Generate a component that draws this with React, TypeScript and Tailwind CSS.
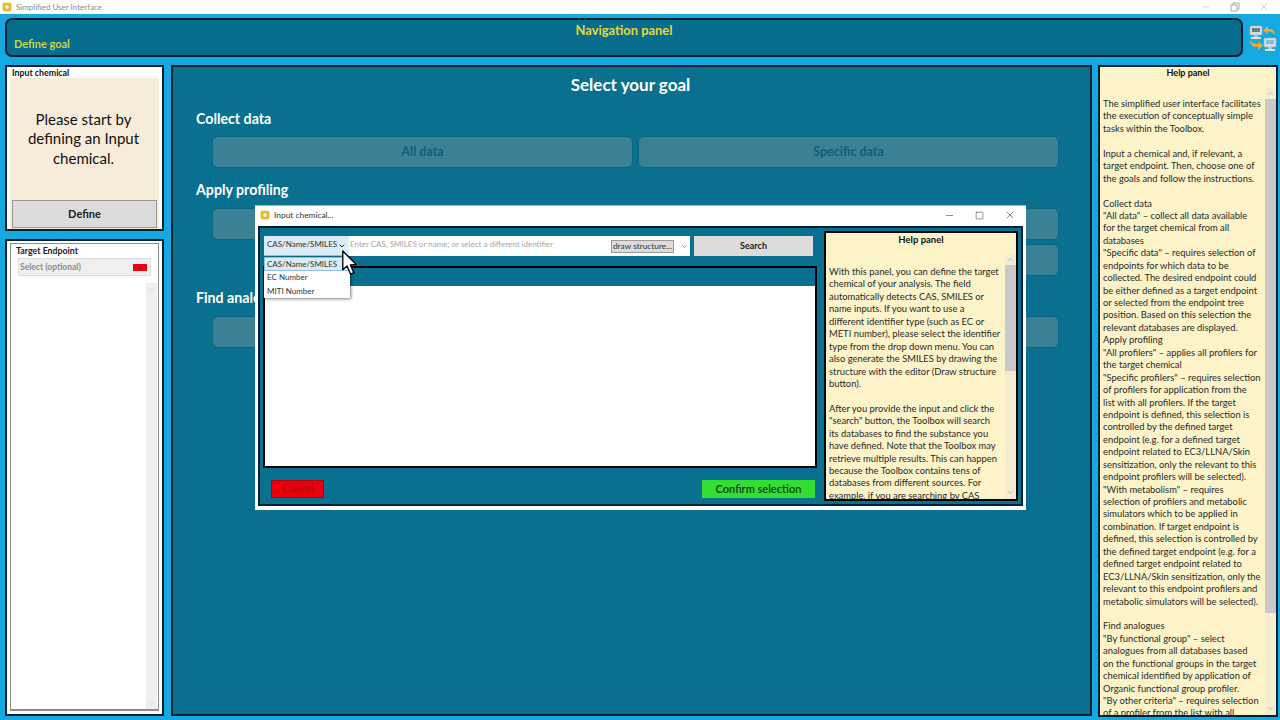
import React from "react";
import { ChevronDown, ChevronUp, Minus, Square, X } from "lucide-react";

const mainHelp = [
  "The simplified user interface facilitates",
  "the execution of conceptually simple",
  "tasks within the Toolbox.",
  "",
  "Input a chemical and, if relevant, a",
  "target endpoint. Then, choose one of",
  "the goals and follow the instructions.",
  "",
  "Collect data",
  "\"All data\" – collect all data available",
  "for the target chemical from all",
  "databases",
  "\"Specific data\" – requires selection of",
  "endpoints for which data to be",
  "collected. The desired endpoint could",
  "be either defined as a target endpoint",
  "or selected from the endpoint tree",
  "position. Based on this selection the",
  "relevant databases are displayed.",
  "Apply profiling",
  "\"All profilers\" – applies all profilers for",
  "the target chemical",
  "\"Specific profilers\" – requires selection",
  "of profilers for application from the",
  "list with all profilers. If the target",
  "endpoint is defined, this selection is",
  "controlled by the defined target",
  "endpoint (e.g. for a defined target",
  "endpoint related to EC3/LLNA/Skin",
  "sensitization, only the relevant to this",
  "endpoint profilers will be selected).",
  "\"With metabolism\" – requires",
  "selection of profilers and metabolic",
  "simulators which to be applied in",
  "combination. If target endpoint is",
  "defined, this selection is controlled by",
  "the defined target endpoint (e.g. for a",
  "defined target endpoint related to",
  "EC3/LLNA/Skin sensitization, only the",
  "relevant to this endpoint profilers and",
  "metabolic simulators will be selected).",
  "",
  "Find analogues",
  "\"By functional group\" – select",
  "analogues from all databases based",
  "on the functional groups in the target",
  "chemical identified by application of",
  "Organic functional group profiler.",
  "\"By other criteria\" – requires selection",
  "of a profiler from the list with all",
];

const modalHelp = [
  "With this panel, you can define the target",
  "chemical of your analysis. The field",
  "automatically detects CAS, SMILES or",
  "name inputs. If you want to use a",
  "different identifier type (such as EC or",
  "METI number), please select the identifier",
  "type from the drop down menu. You can",
  "also generate the SMILES by drawing the",
  "structure with the editor (Draw structure",
  "button).",
  "",
  "After you provide the input and click the",
  "\"search\" button, the Toolbox will search",
  "its databases to find the substance you",
  "have defined. Note that the Toolbox may",
  "retrieve multiple results. This can happen",
  "because the Toolbox contains tens of",
  "databases from different sources. For",
  "example, if you are searching by CAS",
];

const AppIcon = () => (
  <svg width="10" height="10" viewBox="0 0 10 10" className="shrink-0">
    <rect x="0.5" y="0.5" width="9" height="9" rx="2" fill="#f2c230" />
    <rect x="2.6" y="2.6" width="4.8" height="4.8" rx="1.6" fill="#fdf3d0" stroke="#c08a20" strokeWidth="0.8" />
  </svg>
);

const RestoreIcon = () => (
  <svg width="10" height="10" viewBox="0 0 10 10" fill="none" stroke="currentColor" strokeWidth="0.9">
    <rect x="1" y="3" width="6" height="6" />
    <path d="M3 3 V1 H9 V7 H7" />
  </svg>
);

const SwapIcon = () => (
  <svg width="28" height="28" viewBox="0 0 28 28" className="shrink-0">
    <rect x="1" y="2" width="12" height="9" rx="1" fill="#d5dfe4" stroke="#a7b5bc" strokeWidth="0.7" />
    <rect x="3" y="4" width="8" height="4" fill="#6f7d88" />
    <rect x="5" y="11" width="4" height="2" fill="#b9c4ca" />
    <rect x="2" y="13" width="10" height="2" rx="0.5" fill="#dfe6ea" />
    <rect x="15" y="14" width="12" height="9" rx="1" fill="#d5dfe4" stroke="#a7b5bc" strokeWidth="0.7" />
    <rect x="17" y="16" width="8" height="4" fill="#7cc0e4" />
    <rect x="19" y="23" width="4" height="2" fill="#b9c4ca" />
    <rect x="16" y="25" width="10" height="2" rx="0.5" fill="#dfe6ea" />
    <path d="M26 11 C26 6 22 4.5 19 5 L19 2 L14 6.5 L19 10 L19 7.5 C22 7 24 8.5 26 11 Z" fill="#f0a92c" />
    <path d="M1 16 C1 22 5 23.5 9 23 L9 26 L14 21.5 L9 17.5 L9 20 C6 20.5 3 19 1 16 Z" fill="#f0a92c" />
  </svg>
);

const Cursor = () => (
  <svg width="17" height="26" viewBox="0 0 17 27" className="absolute left-[341px] top-[250px]">
    <path d="M1.5 1 L1.5 20.5 L6 16.5 L9.5 25 L13 23.5 L9.5 15.5 L15.5 15 Z" fill="#fff" stroke="#000" strokeWidth="1.4" strokeLinejoin="round" />
  </svg>
);

const GoalButton = ({ label = "" }: { label?: string }) => (
  <div className="h-[32px] rounded-[6px] border border-[#0b6580] bg-[#3a8195] flex items-center justify-center text-[12.5px] font-bold text-[#0f5f78]">
    {label}
  </div>
);

const Lines = ({ lines }: { lines: string[] }) => (
  <div className="text-[9.4px] leading-[12.45px] text-[#2a2a2a] whitespace-nowrap">
    {lines.map((line, i) => (
      <div key={i} className="h-[12.45px]">
        {line}
      </div>
    ))}
  </div>
);

const Scrollbar = ({ thumb }: { thumb: string }) => (
  <div className="w-[11px] shrink-0 flex flex-col items-center bg-[#f3edd2]">
    <ChevronUp size={9} className="text-[#aaa] mt-[1px]" />
    <div className={`w-full bg-[#c9c9c9] mt-[1px] ${thumb}`} />
    <div className="flex-1" />
    <ChevronDown size={9} className="text-[#aaa] my-[2px]" />
  </div>
);

const InputChemicalWindow = () => (
  <div className="absolute left-[255px] top-[205px] w-[771px] h-[305px] bg-white border-t border-[#7fc4dc] flex flex-col px-[3px] pb-[4px]">
    <div className="h-[20px] flex items-center gap-[3px] pl-[2px] pb-[2px] text-[8.4px] text-[#333] shrink-0">
      <AppIcon />
      <span className="ml-[1px]">Input chemical...</span>
      <div className="ml-auto flex items-center gap-[20px] pr-[7px] text-[#333]">
        <Minus size={11} strokeWidth={1.2} />
        <Square size={9} strokeWidth={1.4} />
        <X size={12} strokeWidth={1.2} />
      </div>
    </div>
    <div className="flex-1 bg-[#0a7090] border-2 border-[#03202e] flex min-h-0">
      <div className="w-[563px] shrink-0 flex flex-col pl-[3px] pt-[8px]">
        <div className="flex h-[20px] pl-[1px]">
          <div className="w-[85px] bg-[#d9ecf8] flex items-center justify-between pl-[3px] pr-[3px] pb-[3px] text-[8px] text-[#333] border-b border-[#9cc3dc]">
            <span>CAS/Name/SMILES</span>
            <ChevronDown size={8} strokeWidth={3} className="text-[#222] mt-[3px]" />
          </div>
          <div className="w-[341px] bg-white flex items-center">
            <span className="pl-[1px] text-[8px] text-[#a5a5a5] w-[262px] -mt-[5px] whitespace-nowrap">Enter CAS, SMILES or name; or select a different identifier</span>
            <div className="w-[63px] h-[13px] bg-[#dcdcdc] border border-[#9a9a9a] flex items-center justify-center text-[8.3px] text-[#333] whitespace-nowrap">draw structure...</div>
            <ChevronDown size={7} strokeWidth={2.5} className="text-[#666] ml-[7px]" />
          </div>
          <div className="ml-[4px] w-[119px] bg-[#dcdcdc] flex items-center justify-center text-[9px] font-bold text-[#222]">Search</div>
        </div>
        <div className="w-[554px] h-[202px] mt-[10px] border-2 border-black flex flex-col bg-white">
          <div className="h-[18px] bg-[#0a7090] shrink-0" />
        </div>
        <div className="w-[544px] flex justify-between mt-[12px] ml-[8px]">
          <div className="w-[53px] h-[18px] bg-[#e8000b] border border-[#b3000a] flex items-center justify-center text-[10.5px] text-[#a01018]">Cancel</div>
          <div className="w-[113px] h-[18px] bg-[#33dd33] flex items-center justify-center text-[11px] font-semibold text-[#0a3d16]">Confirm selection</div>
        </div>
      </div>
      <div className="w-[194px] ml-[1px] mt-[3px] h-[270px] border-2 border-black bg-[#fdf3c8] flex flex-col overflow-hidden">
        <div className="h-[21px] shrink-0 text-center text-[9.5px] font-bold text-[#111] leading-[13px]">Help panel</div>
        <div className="flex flex-1 min-h-0">
          <div className="flex-1 pl-[3px] pt-[12px] overflow-hidden min-w-0">
            <Lines lines={modalHelp} />
          </div>
          <Scrollbar thumb="h-[106px]" />
        </div>
      </div>
    </div>
  </div>
);

const IdentifierMenu = () => (
  <div className="absolute left-[264px] top-[257px] w-[86px] h-[41px] bg-white shadow-[1px_1px_3px_rgba(0,0,0,0.5)] text-[8px] text-[#333] flex flex-col">
    <div className="h-[13.5px] bg-[#d9ecf8] border border-[#8fc0dc] flex items-center pl-[2px]">CAS/Name/SMILES</div>
    <div className="h-[13.5px] flex items-center pl-[3px]">EC Number</div>
    <div className="h-[13.5px] flex items-center pl-[3px]">MITI Number</div>
  </div>
);

export default function App() {
  return (
    <div className="relative w-[1280px] h-[720px] overflow-hidden bg-[#16a8e0] flex flex-col font-['Lato','Noto_Sans',sans-serif]">
      {/* title bar */}
      <div className="h-[14px] shrink-0 bg-white flex items-center gap-[4px] pl-[2px] text-[8px] text-[#8a8a8a]">
        <AppIcon />
        <span>Simplified User Interface</span>
        <div className="ml-auto flex items-center gap-[19px] pr-[11px] text-[#a0a0a0]">
          <Minus size={10} strokeWidth={1.2} />
          <RestoreIcon />
          <X size={10} strokeWidth={1.2} />
        </div>
      </div>

      {/* navigation */}
      <div className="flex items-center mt-[4px] pl-[5px] shrink-0">
        <div className="w-[1238px] h-[39px] rounded-[7px] border-2 border-[#03202e] bg-[#076d8d] px-[7px] relative">
          <div className="text-center text-[12.9px] font-bold text-[#e6d53a] leading-[16px] pt-[2px]">Navigation panel</div>
          <div className="text-[11px] font-bold text-[#c9d63e] leading-[14px] -mt-[1px]">Define goal</div>
        </div>
        <div className="ml-[6px]">
          <SwapIcon />
        </div>
      </div>

      <div className="flex mt-[8px] pl-[5px] h-[651px]">
        {/* left column */}
        <div className="w-[159px] shrink-0 flex flex-col gap-[8px]">
          <div className="h-[166px] bg-white border-2 border-[#03202e] flex flex-col px-[3px] shrink-0">
            <div className="h-[11px] text-[8.8px] font-bold text-[#111] pl-[2px] leading-[11px]">Input chemical</div>
            <div className="flex-1 bg-[#f7ecda] flex flex-col">
              <div className="flex-1 flex items-center justify-center text-center text-[15px] leading-[19.5px] text-[#111] px-[10px] pr-[12px]">
                Please start by defining an Input chemical.
              </div>
              <div className="mx-[2px] h-[28px] mb-[1px] bg-[#dcdcdc] border border-[#9a9a9a] flex items-center justify-center text-[11px] font-bold text-[#222]">
                Define
              </div>
            </div>
          </div>
          <div className="flex-1 bg-white border-2 border-[#03202e] pt-[2px] px-[3px] pb-[3px] min-h-0">
            <div className="h-full border border-[#8a8a8a] border-b-2 flex flex-col">
              <div className="h-[14px] text-[8.8px] font-bold text-[#222] pl-[5px] leading-[14px]">Target Endpoint</div>
              <div className="mx-[7px] h-[18px] bg-[#efefef] border border-[#ddd] flex items-center justify-between pl-[1px] pr-[3px] text-[8.5px] font-bold text-[#8c8c8c]">
                <span>Select (optional)</span>
                <div className="w-[14px] h-[7px] bg-[#e60012]" />
              </div>
              <div className="flex-1 flex justify-end mt-[7px] min-h-0 pr-[1px]">
                <div className="w-[11px] bg-[#efefef] flex flex-col items-center justify-between">
                  <ChevronUp size={9} className="text-[#ccc] mt-[2px]" />
                  <ChevronDown size={9} className="text-[#ccc] mb-[1px]" />
                </div>
              </div>
            </div>
          </div>
        </div>

        {/* center */}
        <div className="w-[921px] ml-[7px] shrink-0 bg-[#0a7090] border-2 border-[#03202e] h-[651px] pl-[23px] pr-[31px]">
          <div className="text-center text-[17px] font-bold text-white leading-[22px] pt-[7px] pl-[6px]">Select your goal</div>
          <div className="text-[14.2px] font-bold text-white leading-[20px] mt-[13px]">Collect data</div>
          <div className="grid grid-cols-2 gap-x-[5px] mt-[7px] ml-[16px]">
            <GoalButton label="All data" />
            <GoalButton label="Specific data" />
          </div>
          <div className="text-[14.2px] font-bold text-white leading-[20px] mt-[12px]">Apply profiling</div>
          <div className="grid grid-cols-2 gap-x-[5px] gap-y-[4px] mt-[8px] ml-[16px]">
            <GoalButton />
            <GoalButton />
            <div />
            <GoalButton />
          </div>
          <div className="text-[14.2px] font-bold text-white leading-[20px] mt-[12px]">Find analogues</div>
          <div className="grid grid-cols-2 gap-x-[5px] mt-[8px] ml-[16px]">
            <GoalButton />
            <GoalButton />
          </div>
        </div>

        {/* help */}
        <div className="w-[180px] ml-[6px] shrink-0 bg-[#fdf3c8] border-2 border-[#03202e] h-[652px] flex flex-col overflow-hidden">
          <div className="h-[21px] shrink-0 text-center text-[9px] font-bold text-[#111] leading-[11px]">Help panel</div>
          <div className="flex flex-1 min-h-0">
            <div className="flex-1 pl-[3px] pt-[10px] overflow-hidden min-w-0">
              <Lines lines={mainHelp} />
            </div>
            <Scrollbar thumb="h-[514px]" />
          </div>
        </div>
      </div>

      <InputChemicalWindow />
      <IdentifierMenu />
      <Cursor />
    </div>
  );
}
